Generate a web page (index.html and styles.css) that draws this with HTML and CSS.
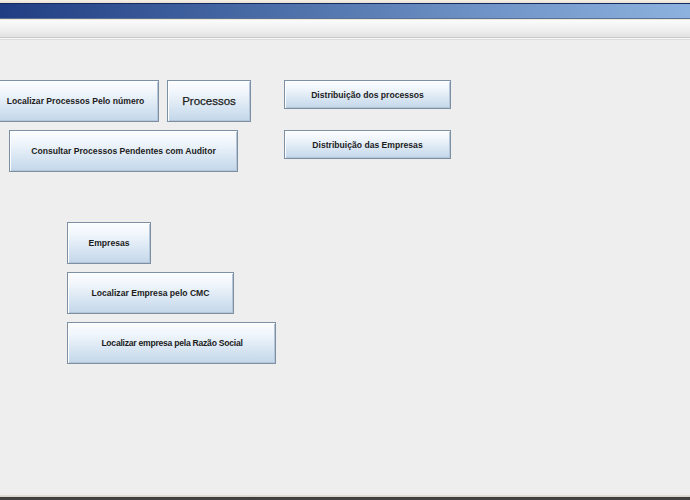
FILE: index.html
```html
<!DOCTYPE html>
<html lang="pt">
<head>
<meta charset="utf-8">
<title>Sistema</title>
<link rel="stylesheet" href="styles.css">
</head>
<body>
<div class="window">
  <div class="top-edge"></div>
  <div class="titlebar"></div>
  <div class="title-sep"></div>
  <div class="toolbar"></div>
  <div class="content">
    <div class="group-top">
      <div class="col-left">
        <div class="row">
          <button class="btn btn-num">Localizar Processos Pelo número</button>
          <button class="btn btn-proc">Processos</button>
        </div>
        <button class="btn btn-pend">Consultar Processos Pendentes com Auditor</button>
      </div>
      <div class="col-right">
        <button class="btn btn-dist">Distribuição dos processos</button>
        <button class="btn btn-dist">Distribuição das Empresas</button>
      </div>
    </div>
    <div class="group-emp">
      <button class="btn btn-emp">Empresas</button>
      <button class="btn btn-cmc">Localizar Empresa pelo CMC</button>
      <button class="btn btn-razao">Localizar empresa pela Razão Social</button>
    </div>
  </div>
  <div class="bottom-edge"></div>
</div>
</body>
</html>
```
FILE: styles.css
```css
* { box-sizing: border-box; }
html, body { margin: 0; padding: 0; }
body {
  width: 690px;
  height: 500px;
  overflow: hidden;
  background: #eeeeee;
  font-family: "Liberation Sans", Arial, sans-serif;
}
.window {
  display: flex;
  flex-direction: column;
  height: 500px;
}
.top-edge {
  height: 3px;
  background: linear-gradient(#f6f1e8, #e9dfcf);
}
.titlebar {
  height: 16px;
  border-top: 1px solid #152c66;
  border-bottom: 1px solid #5a6f95;
  background: linear-gradient(90deg, #203d83 0%, #4668a3 35%, #6f93c6 70%, #8db2de 100%);
}
.title-sep {
  height: 1px;
  background: #efe6d6;
}
.toolbar {
  height: 18px;
  background: linear-gradient(#fbfbfb 0%, #f1f1f1 50%, #e2e2e2 100%);
  border-bottom: 1px solid #c9c9c9;
  box-shadow: 0 1px 0 #f8f8f8, 0 2px 0 #dcdcdc;
}
.content {
  flex: 1;
  padding-top: 42px;
}
.group-top {
  display: flex;
  align-items: flex-start;
  gap: 33px;
  margin-left: -8px;
}
.col-left {
  display: flex;
  flex-direction: column;
  gap: 8px;
}
.row {
  display: flex;
  gap: 8px;
}
.col-right {
  display: flex;
  flex-direction: column;
  gap: 21px;
}
.group-emp {
  display: flex;
  flex-direction: column;
  align-items: flex-start;
  gap: 8px;
  margin-top: 50px;
  margin-left: 67px;
}
.btn {
  display: flex;
  align-items: center;
  justify-content: center;
  height: 42px;
  padding: 0;
  margin: 0;
  border: 1px solid #7d8fa3;
  border-radius: 0;
  background: linear-gradient(#fbfdff 0%, #f2f7fc 25%, #dce8f4 60%, #c3d7ea 100%);
  box-shadow: inset 1px 1px 0 #ffffff, inset -1px -1px 0 #b4c6d8;
  font-family: "Liberation Sans", Arial, sans-serif;
  font-weight: bold;
  font-size: 8.6px;
  color: #1c1c1c;
  white-space: nowrap;
}
.btn-num { width: 167px; }
.btn-proc { width: 84px; font-size: 11.5px; font-weight: normal; -webkit-text-stroke: 0.25px #1c1c1c; }
.btn-pend { width: 229px; margin-left: 17px; }
.btn-dist { width: 167px; height: 29px; }
.btn-emp { width: 84px; }
.btn-cmc { width: 167px; }
.btn-razao { width: 209px; letter-spacing: -0.25px; padding-left: 1px; }
.bottom-edge {
  height: 5px;
  background: linear-gradient(#e2ded6 0%, #d6d2ca 40%, #3c3c3c 40%, #444 100%);
}
```
